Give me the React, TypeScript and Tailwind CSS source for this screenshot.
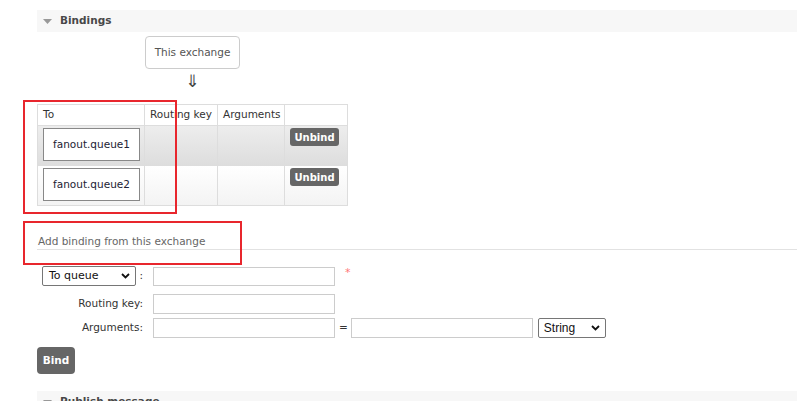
import React from "react";

function Tri() {
  return (
    <svg width="9" height="5" viewBox="0 0 9 5" className="shrink-0">
      <polygon points="0,0 9,0 4.5,5" fill="#999" />
    </svg>
  );
}

function Chevron() {
  return (
    <svg width="9" height="6" viewBox="0 0 9 6">
      <polyline points="1,1 4.5,4.5 8,1" fill="none" stroke="#111" strokeWidth="1.8" />
    </svg>
  );
}

export default function App() {
  return (
    <div className="relative w-[801px] h-[401px] overflow-hidden bg-white font-['DejaVu_Sans',sans-serif] text-[10.5px] text-[#333]">
      <div className="pl-[37px] pr-[4px] pt-[10px]">
        <div className="h-[22px] bg-[#f7f7f7] flex items-center">
          <div className="ml-[6px]"><Tri /></div>
          <span className="ml-[8px] font-bold text-[#484848]">Bindings</span>
        </div>

        <div className="ml-[108px] mt-[4px] w-[95px] h-[33px] border border-[#ccc] rounded-[4px] flex items-center justify-center text-[#555]">
          This exchange
        </div>
        <div className="ml-[108px] w-[95px] h-[35px] flex justify-center pt-[2px] text-[17px] leading-[20px] text-[#444]">
          ⇓
        </div>

        <table className="border-collapse">
          <thead>
            <tr className="h-[21px]">
              <th className="w-[107px] border border-[#ddd] text-left font-normal pl-[5px] bg-white">To</th>
              <th className="w-[73px] border border-[#ddd] text-left font-normal pl-[5px] bg-white">Routing key</th>
              <th className="w-[67px] border border-[#ddd] text-left font-normal pl-[5px] bg-white">Arguments</th>
              <th className="w-[63px] border border-[#ddd] bg-white"></th>
            </tr>
          </thead>
          <tbody>
            {[
              { q: "fanout.queue1", bg: "bg-gradient-to-b from-[#ededed] to-[#dddddd]" },
              { q: "fanout.queue2", bg: "bg-gradient-to-b from-white to-[#f3f3f3]" },
            ].map((r) => (
              <tr key={r.q} className={"h-[40px] " + r.bg}>
                <td className="border border-[#ddd] align-top pt-[2px] pl-[5px] pr-[4px]">
                  <div className="w-[97px] h-[33px] border border-[#888] bg-white flex items-center justify-center text-[#223]">
                    {r.q}
                  </div>
                </td>
                <td className="border border-[#ddd]"></td>
                <td className="border border-[#ddd]"></td>
                <td className="border border-[#ddd] align-top pt-[2px] pl-[5px]">
                  <div className="w-[49px] h-[18px] rounded-[3px] bg-[#666] text-white font-bold text-[10px] flex items-center justify-center">
                    Unbind
                  </div>
                </td>
              </tr>
            ))}
          </tbody>
        </table>

        <div className="mt-[28px] leading-[14px] pb-[1px] pl-[1px] border-b border-[#e2e2e2] text-[#666]">
          Add binding from this exchange
        </div>

        <div className="mt-[16px] flex items-center h-[20px]">
          <div className="w-[106px] flex items-center pl-[5px]">
            <div className="w-[96px] h-[20px] border border-[#767676] rounded-[2px] flex items-center justify-between pl-[6px] pr-[5px] text-[#111] text-[11px]">
              <span>To queue</span>
              <Chevron />
            </div>
            <span className="ml-[3px] text-[#333]">:</span>
          </div>
          <div className="ml-[10px] w-[182px] h-[19px] border border-[#ccc]"></div>
          <span className="ml-[10px] self-start -mt-[1px] text-[#f77] text-[11px]">*</span>
        </div>

        <div className="mt-[8px] flex items-center h-[20px]">
          <div className="w-[106px] text-right">Routing key:</div>
          <div className="ml-[10px] w-[182px] h-[20px] border border-[#ccc]"></div>
        </div>

        <div className="mt-[4px] flex items-center h-[20px]">
          <div className="w-[106px] text-right">Arguments:</div>
          <div className="ml-[10px] w-[182px] h-[20px] border border-[#ccc]"></div>
          <span className="ml-[4px] text-[#333]">=</span>
          <div className="ml-[3px] w-[182px] h-[20px] border border-[#ccc]"></div>
          <div className="ml-[5px] w-[68px] h-[20px] border border-[#767676] rounded-[2px] flex items-center justify-between pl-[5px] pr-[5px] text-[#111] font-['Liberation_Sans',sans-serif] text-[12px]">
            <span>String</span>
            <Chevron />
          </div>
        </div>

        <div className="mt-[9px] w-[38px] h-[27px] rounded-[4px] bg-[#666] text-white font-bold flex items-center justify-center">
          Bind
        </div>

        <div className="mt-[17px] h-[22px] bg-[#f7f7f7] flex items-center">
          <div className="ml-[6px]"><Tri /></div>
          <span className="ml-[8px] font-bold text-[#484848]">Publish message</span>
        </div>
      </div>

      <div className="absolute left-[23px] top-[100px] w-[154px] h-[114px] border-2 border-[#e8262d]"></div>
      <div className="absolute left-[23px] top-[221px] w-[219px] h-[44px] border-2 border-[#e8262d]"></div>
    </div>
  );
}
